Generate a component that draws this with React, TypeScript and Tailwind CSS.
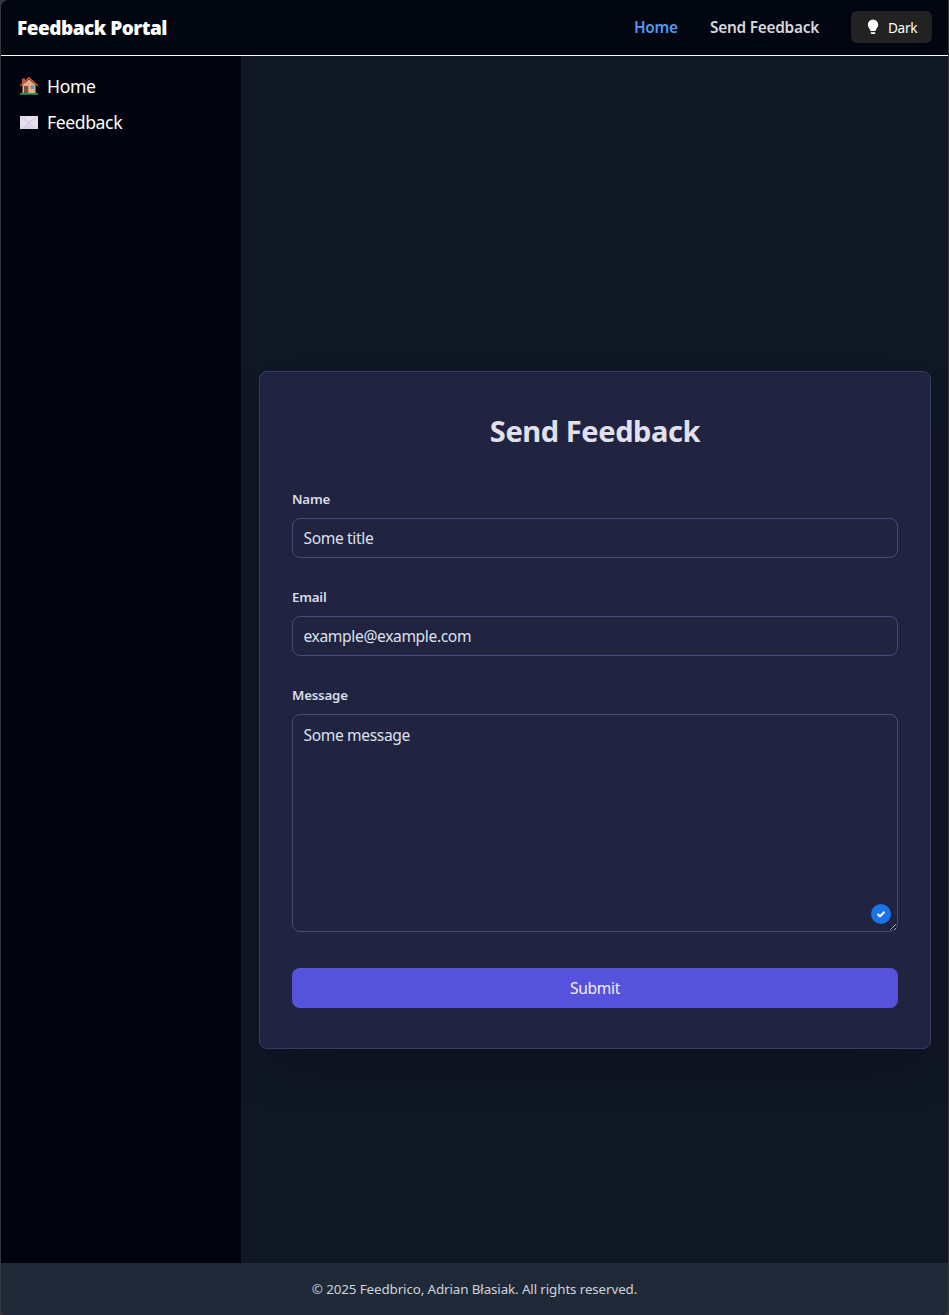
import type { ReactNode } from "react";

function HouseIcon() {
  return (
    <svg viewBox="0 0 20 20" className="h-5 w-5 shrink-0">
      <path d="M3 2.5h3v6H3z" fill="#b8553f" />
      <path d="M3.5 9 10 3.2 16.5 9v9h-13z" fill="#e8ab82" />
      <path d="M1.3 9.8 10 1.8l8.7 8" fill="none" stroke="#cf5a43" strokeWidth="1.4" />
      <path d="M5 10h4.2v8H5z" fill="#7b4c3e" />
      <path d="M11.7 9.5h3.6V13h-3.6z" fill="#3aa5d6" />
      <path d="M1 17h18v1.8H1z" fill="#20995b" />
    </svg>
  );
}

function EnvelopeIcon() {
  return (
    <svg viewBox="0 0 20 20" className="h-5 w-5 shrink-0">
      <path d="M1 4h18v13H1z" fill="#e9dff0" />
      <path d="m1 17 7-6h4l7 6z" fill="#e0d1ec" />
      <path d="m2 5 8 5.5L18 5" fill="none" stroke="#c2b3cd" strokeWidth=".7" />
    </svg>
  );
}

function BulbIcon() {
  return (
    <svg viewBox="0 0 12 16" className="h-4 w-3" fill="#fff">
      <path d="M6 .5A5.2 5.2 0 0 0 .8 5.7c0 2.1 1.3 3.3 2.1 4.6.3.5.4 1 .5 1.7h5.2c.1-.7.2-1.2.5-1.7.8-1.3 2.1-2.5 2.1-4.6A5.2 5.2 0 0 0 6 .5zM3.7 13.2h4.6v.5c0 .7-.4 1.2-1 1.2H4.7c-.6 0-1-.5-1-1.2z" />
    </svg>
  );
}

function Field({ label, children }: { label: string; children: ReactNode }) {
  return (
    <label className="block">
      <span className="mb-[9px] block h-5 text-[13.3px] leading-5 font-semibold tracking-[-0.2px] text-[#dadce8]">{label}</span>
      {children}
    </label>
  );
}

const control =
  "block w-full rounded-lg border border-[#434d79] bg-transparent px-[10.5px] text-[15.6px] tracking-[-0.37px] text-[#dfe1ed] outline-none";

export default function App() {
  return (
    <div className="h-[1315px] bg-[#34373b] pr-px pl-px font-['Noto_Sans',sans-serif]">
      <div className="flex h-full flex-col overflow-hidden rounded-tl-lg rounded-b-md bg-[#101725]">
        <header className="flex h-14 shrink-0 items-center justify-between border-b border-white bg-[#020610] px-4">
          <span className="pt-0.5 text-[19px] font-black tracking-[-0.5px] text-white">Feedback Portal</span>
          <nav className="flex items-center pb-0.5">
            <a className="mr-8 w-11 pt-[3px] text-[15.4px] font-semibold tracking-[-0.3px] whitespace-nowrap text-[#5299f5]">Home</a>
            <a className="mr-8 w-[109px] pt-[3px] text-[15.4px] font-semibold tracking-[-0.25px] whitespace-nowrap text-[#d5d7dc]">Send Feedback</a>
            <button className="flex h-8 w-[81px] items-center gap-[9px] rounded-md bg-[#222222] pl-4 text-[13.6px] tracking-[-0.3px] text-white">
              <BulbIcon />
              <span className="pt-[3px]">Dark</span>
            </button>
          </nav>
        </header>
        <div className="flex min-h-0 flex-1">
          <aside className="z-10 flex w-60 shrink-0 flex-col gap-2 bg-[#01040e] px-[18px] pt-4 text-[17.6px] tracking-[-0.4px] text-white">
            <a className="flex h-7 items-center gap-2"><HouseIcon />Home</a>
            <a className="flex h-7 items-center gap-2"><EnvelopeIcon />Feedback</a>
          </aside>
          <main className="flex flex-1 flex-col pt-[315px] pr-[17px] pl-[18px]">
            <form className="h-[678px] rounded-lg border border-[#343e63] bg-[#202440] px-8 pt-[39px] shadow-2xl">
              <h1 className="h-10 text-center text-[29px] leading-10 font-bold tracking-[-0.4px] text-[#e0e1ed]">Send Feedback</h1>
              <div className="mt-[38px] flex flex-col gap-[29px]">
                <Field label="Name">
                  <input defaultValue="Some title" className={`${control} h-10`} />
                </Field>
                <Field label="Email">
                  <input defaultValue="example@example.com" className={`${control} h-10`} />
                </Field>
                <Field label="Message">
                  <span className="relative block">
                    <textarea defaultValue="Some message" className={`${control} h-[218px] py-2 leading-6`} />
                    <svg viewBox="0 0 20 20" className="absolute right-[7px] bottom-2 h-5 w-5">
                      <circle cx="10" cy="10" r="10" fill="#1a73e8" />
                      <path d="m6.5 10.1 2.5 2.3 4.5-4.6" fill="none" stroke="#fff" strokeWidth="2" />
                    </svg>
                  </span>
                </Field>
              </div>
              <button className="mt-9 h-10 w-full rounded-lg bg-[#5752db] pt-0.5 text-[15.6px] tracking-[-0.3px] text-[#f0effc]">Submit</button>
            </form>
          </main>
        </div>
        <footer className="flex h-[52px] shrink-0 items-center justify-center bg-[#1f2937] text-[13.4px] tracking-[-0.12px] text-[#cfd3da]">© 2025 Feedbrico, Adrian Błasiak. All rights reserved.</footer>
      </div>
    </div>
  );
}
